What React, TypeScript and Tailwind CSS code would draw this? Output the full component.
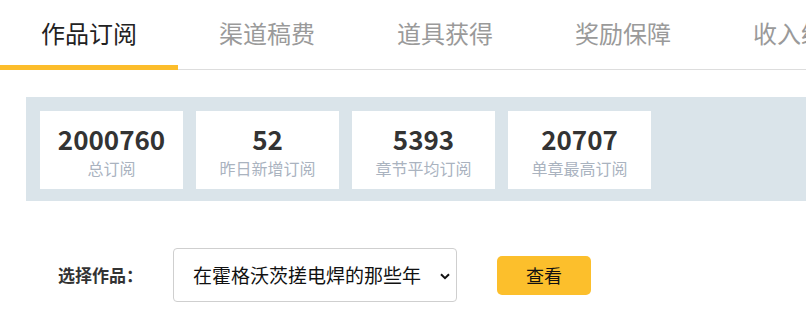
const tabs = ["作品订阅", "渠道稿费", "道具获得", "奖励保障", "收入统计"];

const stats = [
  { value: "2000760", label: "总订阅" },
  { value: "52", label: "昨日新增订阅" },
  { value: "5393", label: "章节平均订阅" },
  { value: "20707", label: "单章最高订阅" },
];

export default function App() {
  return (
    <div className="h-[317px] w-[806px] overflow-hidden bg-white font-['Noto_Sans_CJK_SC',sans-serif]">
      {/* tabs */}
      <div className="flex h-[70px] border-b border-[#dddddd]">
        {tabs.map((t, i) => (
          <div
            key={t}
            className={
              i === 0
                ? "-mb-px flex h-[70px] w-[178px] shrink-0 justify-center border-b-[5px] border-[#fcbd2b] pt-[17px] text-[24px] leading-[32px] text-[#222222]"
                : "flex h-[69px] w-[178px] shrink-0 justify-center pt-[17px] text-[24px] leading-[32px] text-[#9a9a9a]"
            }
          >
            <span className="whitespace-nowrap">{t}</span>
          </div>
        ))}
      </div>

      {/* stats */}
      <div className="ml-[26px] mt-[27px] flex h-[104px] gap-[13px] bg-[#dae4ea] pl-[14px] pt-[14px]">
        {stats.map((s) => (
          <div
            key={s.label}
            className="flex h-[78px] w-[143px] flex-col items-center bg-white pt-[11px]"
          >
            <span className="text-[26px] font-bold leading-[34px] text-[#333333]">
              {s.value}
            </span>
            <span className="mt-[1px] text-[16px] leading-[22px] text-[#aab3bf]">
              {s.label}
            </span>
          </div>
        ))}
      </div>

      {/* select row */}
      <div className="mt-[47px] flex items-center pl-[58px]">
        <span className="text-[17px] font-bold leading-[24px] text-[#333333]">选择作品：</span>
        <div className="relative ml-[30px] h-[54px] w-[284px]">
          <select className="h-full w-full appearance-none rounded-[4px] border border-[#cfcfcf] bg-white pl-[19px] text-[19px] text-[#111111] outline-none">
            <option>在霍格沃茨搓电焊的那些年</option>
          </select>
          <svg
            className="pointer-events-none absolute left-[267px] top-[25px]"
            width="10"
            height="7"
            viewBox="0 0 10 7"
          >
            <path d="M1 1.2 5 5.2 9 1.2" fill="none" stroke="#111" strokeWidth="2" />
          </svg>
        </div>
        <button className="ml-[40px] h-[39px] w-[94px] rounded-[5px] bg-[#fcbf2c] text-[18px] text-[#111111]">
          查看
        </button>
      </div>
    </div>
  );
}
